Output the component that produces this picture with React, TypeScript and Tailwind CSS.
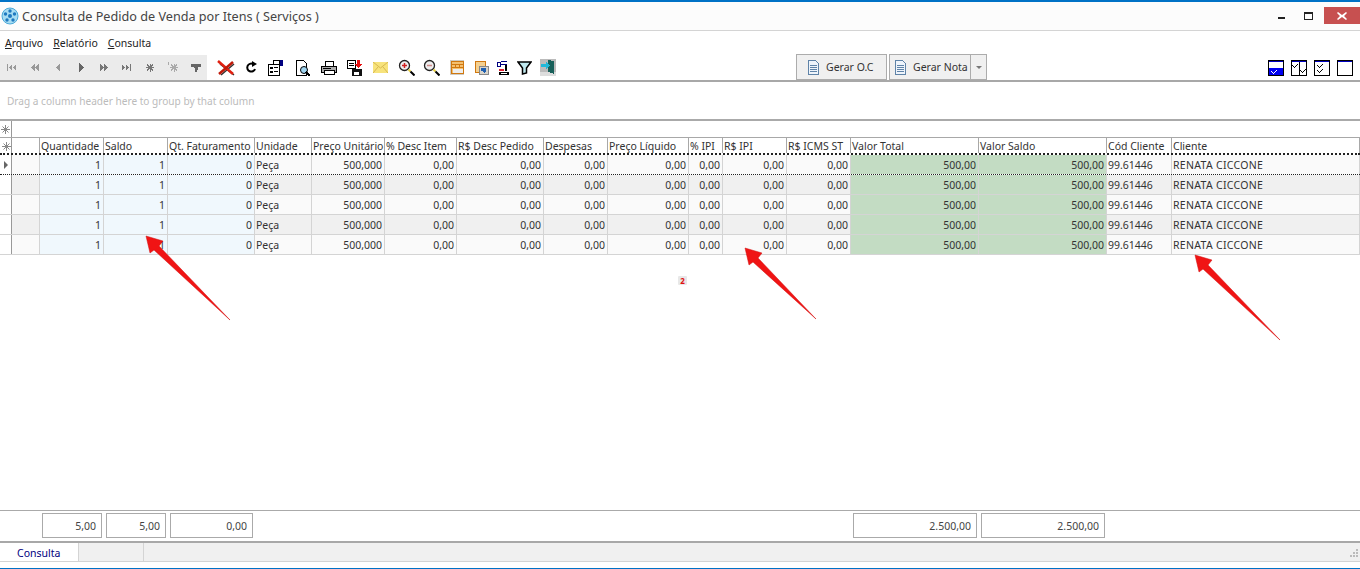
import React from "react";

const GRID = "grid grid-cols-[12px_28px_64px_64px_87px_57px_73px_72px_87px_64px_81px_34px_64px_64px_128px_128px_65px_1fr]";

const headers = ["", "", "Quantidade", "Saldo", "Qt. Faturamento", "Unidade", "Preço Unitário", "% Desc Item", "R$ Desc Pedido", "Despesas", "Preço Líquido", "% IPI", "R$ IPI", "R$ ICMS ST", "Valor Total", "Valor Saldo", "Cód Cliente", "Cliente"];
const values = ["1", "1", "0", "Peça", "500,000", "0,00", "0,00", "0,00", "0,00", "0,00", "0,00", "0,00", "500,00", "500,00", "99.61446", "RENATA CICCONE"];
const leftIdx = [3, 14, 15];

function Sv({ children, w = 16, h = 16 }: { children: React.ReactNode; w?: number; h?: number }) {
  return <svg width={w} height={h} viewBox={`0 0 ${w} ${h}`} shapeRendering="crispEdges" className="block shrink-0">{children}</svg>;
}

const N = "#999";
const navIcons: React.ReactNode[] = [
  <g fill={N}><rect x="3" y="4" width="1" height="7" /><path d="M8 4v7L5 7.500zM12 4v7L9 7.500z" /></g>,
  <path fill={N} d="M8 4v7L4 7.500zM12 4v7L8 7.500z" />,
  <path fill={N} d="M10 3v9L6 7.500z" />,
  <path fill="#666" d="M6 3v9l5-4.500z" />,
  <path fill="#777" d="M4 4v7l4-3.500zM8 4v7l4-3.500z" />,
  <g fill="#777"><path d="M3 4v7l3-3.500zM7 4v7l3-3.500z" /><rect x="11" y="4" width="1" height="7" /></g>,
  <path stroke="#777" strokeWidth="1" fill="none" d="M8 3.500v8M4 7.500h8M5 4.500l6 6M11 4.500l-6 6" />,
  <path stroke="#aaa" strokeWidth="1" fill="none" d="M9 3.500v8M5 7.500h8M6 4.500l6 6M12 4.500l-6 6M3 2v3" />,
  <path fill="#666" d="M3 4h10v3H10v2l-1 3H7V9L6 7H3z" />,
];

function Toolbar() {
  return (
    <div className="flex h-[27px] items-start border-b-2 border-[#a8a8a8]">
      <div className="flex h-[25px] w-[207px] items-center bg-[#ebebeb]">
        {navIcons.map((ic, i) => (
          <div key={i} className="flex w-[23px] justify-center">
            <Sv>{ic}</Sv>
          </div>
        ))}
      </div>
      <div className="ml-[6px] flex h-[25px] items-center">
        <Slot w={26}>
          <Sv w={20} h={18}>
            <path d="M4 5L18 16M18 5L5 16" stroke="#333" strokeWidth="1.500" fill="none" shapeRendering="auto" />
            <path d="M2 2L17 15" stroke="#e02010" strokeWidth="2.500" fill="none" shapeRendering="auto" />
            <path d="M17 3L3 15" stroke="#c01808" strokeWidth="2.500" fill="none" shapeRendering="auto" />
          </Sv>
        </Slot>
        <Slot w={23}>
          <svg width="14" height="14" viewBox="0 0 14 14" className="block">
            <path d="M11 8a4 4 0 1 1-2-5" stroke="#000" strokeWidth="2" fill="none" />
            <path d="M8 0l5 3-5 3z" fill="#000" />
          </svg>
        </Slot>
        <Slot w={28}>
          <Sv w={18} h={17}>
            <path d="M1.500 5.500h11v11h-11z" fill="#fff" stroke="#000" />
            <path d="M3 8h3v2H3zM7 8h4v1H7zM3 12h3v2H3zM7 12h4v1H7z" fill="#000" />
            <path d="M6 1h6v4H6z" fill="#fff" stroke="#000" />
            <path d="M13 1h3v6h-3z" fill="#000080" />
          </Sv>
        </Slot>
        <Slot w={25}>
          <Sv w={17} h={18}>
            <path d="M2.500 1.500h7l3 3v12h-10z" fill="#fff" stroke="#000" />
            <circle cx="10" cy="11" r="3.500" fill="#9fd4f0" stroke="#000" shapeRendering="auto" />
            <path d="M12 13l4 4" stroke="#000" strokeWidth="2" />
          </Sv>
        </Slot>
        <Slot w={27}>
          <Sv w={18} h={16}>
            <path d="M5 1h8v5H5z" fill="#fff" stroke="#000" />
            <path d="M1.500 6.500h15v6h-15z" fill="#aaa" stroke="#000" />
            <path d="M4 10.500h10v4H4z" fill="#fff" stroke="#000" />
            <path d="M3 8h8v1H3z" fill="#000" />
          </Sv>
        </Slot>
        <Slot w={25}>
          <Sv w={17} h={18}>
            <path d="M1.500 1.500h8v8h-8z" fill="#fff" stroke="#000" />
            <path d="M3 4h5v1H3zM3 6h5v1H3z" fill="#000" />
            <path d="M5.500 9.500h10v7h-10z" fill="#111" />
            <path d="M8 13h5v3H8z" fill="#fff" />
            <path d="M11 1h3v4h2l-3.500 4L9 5h2z" fill="#e81010" />
          </Sv>
        </Slot>
        <Slot w={27}>
          <Sv w={15} h={11}>
            <rect width="15" height="11" fill="#f7e37c" />
            <path d="M0 0l7.500 6L15 0M0 11l5-6M15 11l-5-6" stroke="#d8b850" fill="none" shapeRendering="auto" />
          </Sv>
        </Slot>
        <Slot w={25}><Lens minus={false} /></Slot>
        <Slot w={25}><Lens minus /></Slot>
        <Slot w={26}>
          <Sv w={14} h={15}>
            <rect width="14" height="15" fill="#d0ccc4" />
            <path d="M1 1.500h12v12H1z" fill="#f4c070" stroke="#d07810" />
            <path d="M1 4h12M1 7h12M5 4v3M9 4v3" stroke="#d07810" />
            <path d="M3 9h10v4H3z" fill="#eee" />
          </Sv>
        </Slot>
        <Slot w={23}>
          <Sv w={15} h={15}>
            <path d="M1.500 1.500h10v11h-10z" fill="#f4d090" stroke="#d07810" />
            <path d="M5 6h9v8H5z" fill="#d8d4cc" stroke="#888" />
            <path d="M7 8h5v3l-2 2-1-2H7z" fill="#2060b0" />
          </Sv>
        </Slot>
        <Slot w={20}>
          <Sv w={14} h={15}>
            <path d="M1 2h3v4H1zM5 1h6M5 4h6" stroke="#000080" fill="none" />
            <path d="M9 5h2v6H9z" fill="#000" />
            <path d="M3 9h5v2H3z" fill="#e02030" />
            <path d="M3 12h10v3H3z" fill="#000" />
            <path d="M5 13h6v1H5z" fill="#fff" />
          </Sv>
        </Slot>
        <Slot w={22}>
          <Sv w={15} h={15}>
            <path d="M1 2h13L9.500 8v5l-4 1V8z" fill="#bfe8ee" stroke="#000" strokeWidth="1.500" shapeRendering="auto" />
          </Sv>
        </Slot>
        <Slot w={26}>
          <Sv w={16} h={17}>
            <rect x="0" y="0" width="16" height="13" fill="#bbb" />
            <path d="M0 13h16v4H0z" fill="#ddd" />
            <path d="M8 1l6 1v13l-6-2z" fill="#18605a" />
            <path d="M1 5h5V3l4 3.500L6 10V8H1z" fill="#20b8d8" />
          </Sv>
        </Slot>
      </div>
      <div className="ml-[235px] -mt-[1px] flex gap-[2px]">
        <button className="flex h-[26px] w-[91px] items-center whitespace-nowrap border border-[#acacac] bg-[#f0f0f0] pl-[11px] text-[#333]">
          <DocIcon />
          <span className="ml-[6px]">Gerar O.C</span>
        </button>
        <div className="flex h-[26px] w-[98px] items-center whitespace-nowrap border border-[#acacac] bg-[#f0f0f0] text-[#333]">
          <div className="flex flex-1 items-center pl-[5px]">
            <DocIcon />
            <span className="ml-[6px]">Gerar Nota</span>
          </div>
          <div className="flex h-full w-[16px] items-center justify-center border-l border-[#acacac]">
            <span className="block h-0 w-0 border-x-[3px] border-t-[3px] border-x-transparent border-t-[#777]" />
          </div>
        </div>
      </div>
      <div className="ml-auto mr-[7px] flex h-[25px] items-center gap-[7px] pt-[1px]">
        <WinIcon kind={0} />
        <WinIcon kind={1} />
        <WinIcon kind={2} />
        <WinIcon kind={3} />
      </div>
    </div>
  );
}

function Slot({ w, children }: { w: number; children: React.ReactNode }) {
  return <div className="flex items-center justify-center" style={{ width: w }}>{children}</div>;
}

function Lens({ minus }: { minus: boolean }) {
  return (
    <svg width="17" height="17" viewBox="0 0 17 17" className="block">
      <circle cx="6.500" cy="6.500" r="5" fill="#eee" stroke="#222" strokeWidth="1.300" />
      <path d="M4 6.500h5" stroke={minus ? "#c88" : "#d02020"} strokeWidth="1.500" />
      {!minus && <path d="M6.500 4v5" stroke="#d02020" strokeWidth="1.500" />}
      <path d="M10.500 10.500l2 2" stroke="#e8d040" strokeWidth="2" />
      <path d="M12.500 12.500l4 4" stroke="#000" strokeWidth="2" />
    </svg>
  );
}

function DocIcon() {
  return (
    <Sv w={12} h={15}>
      <path d="M.5 .5h7l3 3v11h-10z" fill="#eef4fb" stroke="#5f83a8" />
      <path d="M2 5h7M2 7h7M2 9h7M2 11h7" stroke="#5f83a8" />
    </Sv>
  );
}

function Star() {
  return (
    <svg width="9" height="9" viewBox="0 0 9 9" className="block">
      <path d="M4.500 0v9M0 4.500h9M1.500 1.500l6 6M7.500 1.500l-6 6" stroke="#888" strokeWidth="1" fill="none" />
    </svg>
  );
}

function WinIcon({ kind }: { kind: 0 | 1 | 2 | 3 }) {
  const chk = (x: number, y: number, c = "#000") => <path d={`M${x} ${y + 2}h1v1h1v1h1v-1h1v-1h1v-1h1v1h-1v1h-1v1h-1v1h-1v-1h-1v-1h-1z`} fill={c} />;
  return (
    <Sv w={16} h={16}>
      <rect x=".5" y=".5" width="15" height="15" fill="#fff" stroke="#000" />
      <rect x="1" y="1" width="14" height="1" fill="#0000c0" />
      {kind === 0 && <><rect x="1" y="8" width="14" height="7" fill="#0000f0" />{chk(3, 9, "#fff")}</>}
      {kind === 1 && <><rect x="8" y="2" width="1" height="13" fill="#000" />{chk(1, 3)}{chk(9, 8)}</>}
      {kind === 2 && <>{chk(3, 3)}{chk(3, 8)}</>}
    </Sv>
  );
}

function Arrow({ tip, tail }: { tip: [number, number]; tail: [number, number] }) {
  const [x, y] = tip;
  const pts = [[x, y], [x + 17, y + 5], [x + 13, y + 10], tail, [x + 8, y + 14], [x + 4, y + 17]].map((p) => p.join(",")).join(" ");
  return <polygon points={pts} fill="#f01414" stroke="#d01010" strokeWidth="0.500" />;
}

export default function App() {
  return (
    <div className="relative flex h-[569px] w-[1360px] flex-col overflow-hidden bg-white font-['Noto_Sans','Open_Sans',sans-serif] text-[10.5px] leading-[14px] text-[#333]">
      {/* title bar */}
      <div className="flex h-[31px] shrink-0 items-center border-t-2 border-b border-t-[#0072c6] border-b-[#d4d4d4] bg-[#fcfcfc] pb-[1px]">
        <svg width="18" height="18" viewBox="0 0 18 18" className="ml-[1px] block">
          <circle cx="9" cy="9" r="8" fill="#a6dcf2" stroke="#4aa8d8" />
          <circle cx="9" cy="9" r="2" fill="#1e78c0" />
          <circle cx="9" cy="4" r="1.700" fill="#1e78c0" />
          <circle cx="4.500" cy="7" r="1.700" fill="#1e78c0" />
          <circle cx="13.500" cy="7" r="1.700" fill="#1e78c0" />
          <circle cx="6" cy="13" r="1.700" fill="#1e78c0" />
          <circle cx="12" cy="13" r="1.700" fill="#1e78c0" />
        </svg>
        <span className="ml-[3px] text-[12.65px] text-[#444]">Consulta de Pedido de Venda por Itens ( Serviços )</span>
        <div className="ml-auto flex items-start self-start">
          <span className="mr-[19px] mt-[15px] block h-[2px] w-[7px] bg-[#222]" />
          <span className="mr-[11px] mt-[10px] block h-[8px] w-[9px] border border-t-2 border-[#222]" />
          <span className="mt-[5px] flex h-[17px] w-[36px] items-center justify-center bg-[#c75050]">
            <svg width="10" height="8" viewBox="0 0 10 8"><path d="M1 0l4 3 4-3 1 1-3 3 3 3-1 1-4-3-4 3-1-1 3-3-3-3z" fill="#fff" /></svg>
          </span>
        </div>
      </div>
      {/* menu */}
      <div className="flex h-[24px] shrink-0 items-center gap-[10px] pl-[5px] text-[#222]">
        <span><u>A</u>rquivo</span>
        <span><u>R</u>elatório</span>
        <span><u>C</u>onsulta</span>
      </div>
      <Toolbar />
      {/* group panel */}
      <div className="flex h-[37px] shrink-0 items-center pl-[7px] pt-[1px] text-[10.1px] text-[#bbb]">Drag a column header here to group by that column</div>
      {/* grid */}
      <div className="relative flex min-h-0 flex-1 flex-col border-t-2 border-[#aaa]">
        <div className="flex h-[17px] shrink-0 border-b border-[#a8a8a8]">
          <div className="flex w-[12px] items-center justify-center border-r border-[#999]"><Star /></div>
        </div>
        <div className={`${GRID} h-[17px] shrink-0 border-b-2 border-dotted border-b-[#222]`}>
          {headers.map((h, i) => (
            <div key={i} className={`whitespace-nowrap border-r pl-[1px] pt-[1px] ${i === 0 ? "flex items-center justify-center border-[#999]" : "border-[#a8a8a8]"}`}>
              {i === 0 ? <Star /> : h}
            </div>
          ))}
        </div>
        {[0, 1, 2, 3, 4].map((r) => (
          <div key={r} className={`${GRID} h-[20px] shrink-0 border-b ${r === 0 ? "border-dotted border-b-[#222]" : "border-[#d4d4d4]"}`}>
            <div className="flex items-center justify-center border-r border-[#999]">
              {r === 0 && <span className="block h-0 w-0 border-y-[4px] border-l-[4px] border-y-transparent border-l-[#666]" />}
            </div>
            <div className={`border-r border-[#d4d4d4] ${r % 2 ? "bg-[#f0f0f0]" : "bg-[#fafafa]"}`} />
            {values.map((v, c) => {
              const left = leftIdx.includes(c);
              const bg = c < 3 ? "bg-[#f0f8fd]" : c === 12 || c === 13 ? "bg-[#c3dcc3]" : r % 2 ? "bg-[#f0f0f0]" : "bg-[#fafafa]";
              return (
                <div key={c} className={`flex items-center overflow-hidden whitespace-nowrap border-r border-[#d4d4d4] ${bg} ${left ? "pl-[1px]" : "justify-end pr-[2px]"} ${c === 15 ? "tracking-[0.3px]" : ""}`}>
                  {v}
                </div>
              );
            })}
          </div>
        ))}
        <div className="absolute left-[678px] top-[155px] flex h-[9px] w-[9px] items-center justify-center rounded-[1px] bg-[#e8e8e8] text-[8px] font-bold leading-none text-[#e01010]">2</div>
      </div>
      {/* footer totals */}
      <div className="flex h-[31px] shrink-0 items-start border-t border-[#aaa] pt-[2px] text-[#444]">
        <div className="ml-[42px] flex h-[25px] w-[60px] items-center justify-end border border-[#aaa] pr-[5px]">5,00</div>
        <div className="ml-[4px] flex h-[25px] w-[60px] items-center justify-end border border-[#aaa] pr-[5px]">5,00</div>
        <div className="ml-[4px] flex h-[25px] w-[83px] items-center justify-end border border-[#aaa] pr-[5px]">0,00</div>
        <div className="ml-[600px] flex h-[25px] w-[124px] items-center justify-end border border-[#aaa] pr-[5px]">2.500,00</div>
        <div className="ml-[4px] flex h-[25px] w-[124px] items-center justify-end border border-[#aaa] pr-[5px]">2.500,00</div>
      </div>
      {/* tabs */}
      <div className="flex h-[21px] shrink-0 items-stretch border-t-2 border-b border-t-[#a8a8a8] border-b-[#d4d4d4] bg-[#f0f0f0]">
        <div className="flex w-[79px] items-center border-r border-[#d4d4d4] bg-white pl-[17px] pt-[2px] text-[#000080]">Consulta</div>
        <div className="w-[65px] border-r border-[#d4d4d4]" />
        <div className="ml-auto mr-[1px] mt-[6px]">
          <svg width="9" height="9" viewBox="0 0 9 9" shapeRendering="crispEdges" className="block">
            <path d="M6 0h2v2H6zM3 3h2v2H3zM6 3h2v2H6zM0 6h2v2H0zM3 6h2v2H3zM6 6h2v2H6z" fill="#bbb" />
          </svg>
        </div>
      </div>
      <div className="h-[6px] shrink-0" />
      <div className="h-[1px] shrink-0 bg-[#0072c6]" />
      {/* annotation arrows */}
      <svg width="1360" height="569" viewBox="0 0 1360 569" className="pointer-events-none absolute left-0 top-0">
        <Arrow tip={[146, 236]} tail={[230, 320]} />
        <Arrow tip={[745, 248]} tail={[816, 319]} />
        <Arrow tip={[1195, 255]} tail={[1280, 340]} />
      </svg>
    </div>
  );
}
